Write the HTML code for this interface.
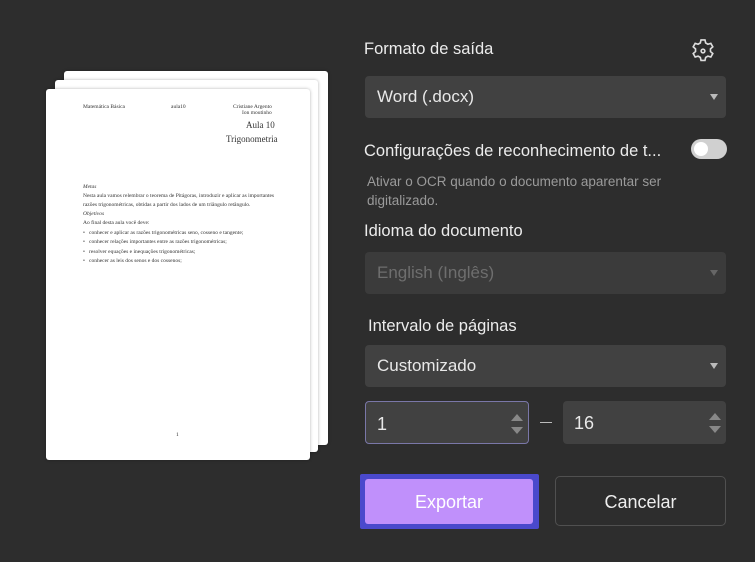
<!DOCTYPE html>
<html><head><style>
body{margin:0;width:755px;height:562px;background:#2d2d2d;font-family:"Liberation Sans",sans-serif;position:relative;overflow:hidden;color:#e8e8e8}
.pg{position:absolute;background:#fff;border-radius:3px;box-shadow:0 0 3px rgba(0,0,0,.3)}
.d{position:absolute;font-family:"Liberation Serif",serif;color:#333;font-size:5.5px;white-space:nowrap}
.lbl{position:absolute;left:364px;font-size:16.5px;color:#ececec}
.sel{position:absolute;left:365px;width:361px;height:42px;background:#414141;border-radius:4px;font-size:17px;line-height:42px;box-sizing:border-box;padding-left:12px}
.arr{position:absolute;right:8px;top:18px;width:0;height:0;border-left:4px solid transparent;border-right:4px solid transparent;border-top:6px solid #bbb}
.num{position:absolute;top:401px;height:43px;background:#414141;border-radius:4px;box-sizing:border-box;font-size:18px;line-height:45px;padding-left:11px}
.up,.dn{position:absolute;right:5px;width:0;height:0;border-left:6px solid transparent;border-right:6px solid transparent}
.up{top:12px;border-bottom:7px solid #888}.dn{top:25px;border-top:7px solid #888}
</style></head><body>
<div class="pg" style="left:64px;top:71px;width:264px;height:374px"></div>
<div class="pg" style="left:55px;top:80px;width:263px;height:372px"></div>
<div class="pg" style="left:46px;top:89px;width:264px;height:371px">
<div class="d" style="left:37px;top:15px">Matemática Básica</div>
<div class="d" style="left:125px;top:15px">aula10</div>
<div class="d" style="left:187px;top:15px">Cristiane Argento</div>
<div class="d" style="left:196px;top:21px">Ion moutinho</div>
<div class="d" style="left:200px;top:31px;font-size:9px">Aula 10</div>
<div class="d" style="left:180px;top:45px;font-size:9px">Trigonometria</div>
<div class="d" style="left:37px;top:95px;font-style:italic">Metas</div>
<div class="d" style="left:37px;top:104px">Nesta aula vamos relembrar o teorema de Pitágoras, introduzir e aplicar as importantes</div>
<div class="d" style="left:37px;top:113px">razões trigonométricas, obtidas a partir dos lados de um triângulo retângulo.</div>
<div class="d" style="left:37px;top:122px;font-style:italic">Objetivos</div>
<div class="d" style="left:37px;top:131px">Ao final desta aula você deve:</div>
<div class="d" style="left:37px;top:141px">•&nbsp;&nbsp;&nbsp;conhecer e aplicar as razões trigonométricas seno, cosseno e tangente;</div>
<div class="d" style="left:37px;top:150px">•&nbsp;&nbsp;&nbsp;conhecer relações importantes entre as razões trigonométricas;</div>
<div class="d" style="left:37px;top:160px">•&nbsp;&nbsp;&nbsp;resolver equações e inequações trigonométricas;</div>
<div class="d" style="left:37px;top:169px">•&nbsp;&nbsp;&nbsp;conhecer as leis dos senos e dos cossenos;</div>
<div class="d" style="left:130px;top:343px">1</div>
</div>

<div class="lbl" style="top:40px">Formato de saída</div>
<svg style="position:absolute;left:689px;top:37px" width="28" height="28" viewBox="0 0 24 24" fill="none" stroke="#ddd" stroke-width="1.4"><path d="M10.3 2.5h3.4l.6 2.6 1.9 1.1 2.5-.8 1.7 3-2 1.8v2.2l2 1.8-1.7 3-2.5-.8-1.9 1.1-.6 2.6h-3.4l-.6-2.6-1.9-1.1-2.5.8-1.7-3 2-1.8v-2.2l-2-1.8 1.7-3 2.5.8 1.9-1.1z"/><circle cx="12" cy="12" r="1.6"/></svg>
<div class="sel" style="top:76px">Word (.docx)<div class="arr"></div></div>
<div class="lbl" style="top:142px">Configurações de reconhecimento de t...</div>
<div style="position:absolute;left:691px;top:139px;width:36px;height:20px;border-radius:10px;background:#d0d0d0"><div style="position:absolute;left:3px;top:3px;width:14px;height:14px;border-radius:7px;background:#fff"></div></div>
<div style="position:absolute;left:367px;top:172px;font-size:13.5px;color:#9a9a9a;line-height:19px;width:360px">Ativar o OCR quando o documento aparentar ser digitalizado.</div>
<div class="lbl" style="top:222px">Idioma do documento</div>
<div class="sel" style="top:252px;color:#6e6e6e;background:#3b3b3b">English (Inglês)<div class="arr" style="border-top-color:#666"></div></div>
<div class="lbl" style="top:317px;left:368px">Intervalo de páginas</div>
<div class="sel" style="top:345px">Customizado<div class="arr"></div></div>
<div class="num" style="left:365px;width:164px;border:1px solid #7a77a8">1<div class="up"></div><div class="dn"></div></div>
<div style="position:absolute;left:540px;top:422px;width:12px;height:1px;background:#bbb"></div>
<div class="num" style="left:563px;width:163px">16<div class="up"></div><div class="dn"></div></div>
<div style="position:absolute;left:360px;top:474px;width:179px;height:55px;background:#4a49cc;border-radius:2px"></div>
<div style="position:absolute;left:365px;top:479px;width:168px;height:45px;background:#c090fb;border-radius:3px;text-align:center;line-height:47px;font-size:18px;color:#fff">Exportar</div>
<div style="position:absolute;left:555px;top:476px;width:171px;height:50px;box-sizing:border-box;border:1px solid #505050;border-radius:5px;text-align:center;line-height:50px;font-size:18px;color:#eee">Cancelar</div>
</body></html>
